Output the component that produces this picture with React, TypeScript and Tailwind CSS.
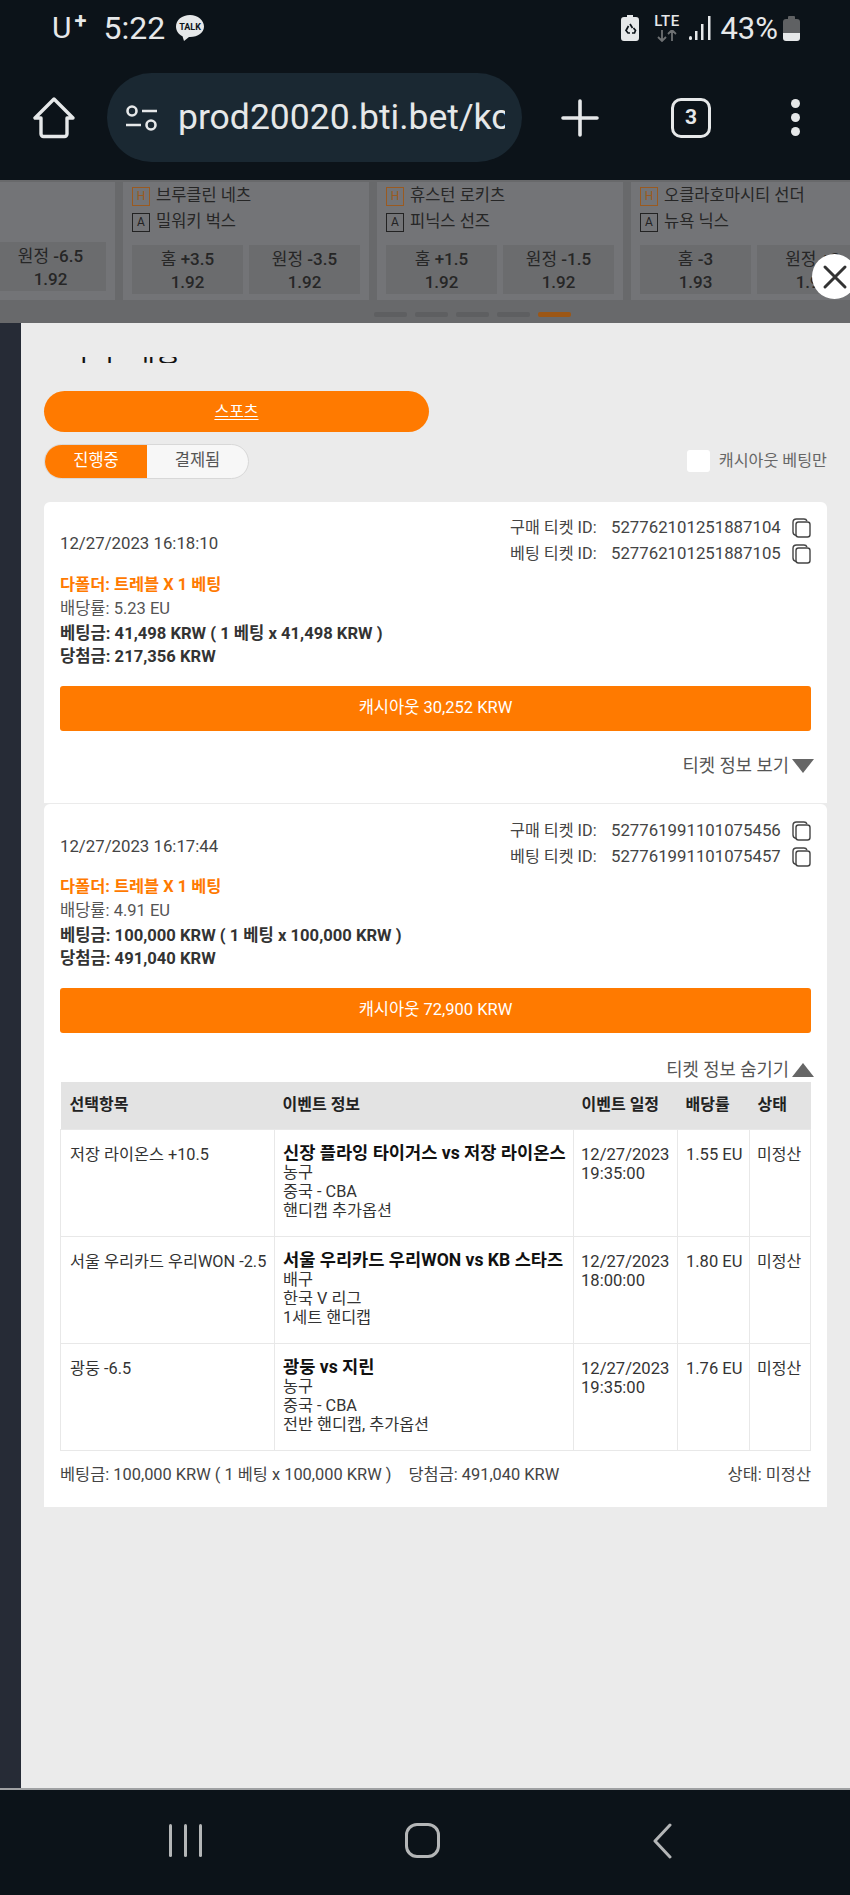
const games = [
  { home: '브루클린 네츠', away: '밀워키 벅스', odds: [['홈', '+3.5', '1.92'], ['원정', '-3.5', '1.92']] },
  { home: '휴스턴 로키츠', away: '피닉스 선즈', odds: [['홈', '+1.5', '1.92'], ['원정', '-1.5', '1.92']] },
  { home: '오클라호마시티 선더', away: '뉴욕 닉스', odds: [['홈', '-3', '1.93'], ['원정', '+3', '1.92']] },
];

const rows = [
  {
    pick: '저장 라이온스 +10.5',
    match: '신장 플라잉 타이거스 vs 저장 라이온스',
    info: ['농구', '중국 - CBA', '핸디캡 추가옵션'],
    date: '12/27/2023',
    time: '19:35:00',
    odds: '1.55 EU',
  },
  {
    pick: '서울 우리카드 우리WON -2.5',
    match: '서울 우리카드 우리WON vs KB 스타즈',
    info: ['배구', '한국 V 리그', '1세트 핸디캡'],
    date: '12/27/2023',
    time: '18:00:00',
    odds: '1.80 EU',
  },
  {
    pick: '광둥 -6.5',
    match: '광둥 vs 지린',
    info: ['농구', '중국 - CBA', '전반 핸디캡, 추가옵션'],
    date: '12/27/2023',
    time: '19:35:00',
    odds: '1.76 EU',
  },
];

function StatusBar() {
  return (
    <div className="flex h-[56px] items-center pl-[52px] pr-[50px] text-[#e6e8e9]">
      <span className="relative text-[30px] leading-none">
        U<span className="absolute -right-[15px] -top-[3px] text-[22px] font-bold">+</span>
      </span>
      <span className="ml-[32px] text-[32px] leading-none">5:22</span>
      <svg width="30" height="28" viewBox="0 0 30 28" className="ml-[10px]">
        <path d="M15 1C7 1 1 6 1 12.5c0 4.200 2.500 7.800 6.500 9.800L9 27l5-4h1c8 0 14-4.500 14-10.500S23 1 15 1z" fill="#e6e8e9" />
        <text x="15" y="16" textAnchor="middle" fontSize="9" fontWeight="700" fill="#0c1319">TALK</text>
      </svg>
      <svg width="18" height="26" viewBox="0 0 18 26" className="ml-auto">
        <path d="M6 0h6v2h3a3 3 0 0 1 3 3v18a3 3 0 0 1-3 3H3a3 3 0 0 1-3-3V5a3 3 0 0 1 3-3h3z" fill="#e6e8e9" />
        <path d="M9 9l2.500 4M7.500 11L5 15.500l2 2.500h2M11 18h2.500l1-2.500L12.500 13" fill="none" stroke="#0c1319" strokeWidth="1.700" />
      </svg>
      <div className="ml-[15px] flex w-[25px] flex-col items-center">
        <span className="text-[15px] font-medium leading-[15px] tracking-[0.5px]">LTE</span>
        <svg width="22" height="12" viewBox="0 0 22 12" className="mt-[1px]">
          <path d="M6 0v11M2 7l4 4 4-4M16 11V0M12 4l4-4 4 4" fill="none" stroke="#6e7173" strokeWidth="1.800" />
        </svg>
      </div>
      <svg width="22" height="24" viewBox="0 0 22 24" className="ml-[10px]">
        <rect x="0" y="20" width="3" height="4" rx="1.500" fill="#e6e8e9" />
        <rect x="6" y="15" width="2.500" height="9" fill="#e6e8e9" />
        <rect x="12" y="8" width="2.500" height="16" fill="#e6e8e9" />
        <rect x="19" y="0" width="2.500" height="24" fill="#e6e8e9" />
      </svg>
      <span className="ml-[9px] text-[31px] leading-none">43%</span>
      <div className="ml-[5px] flex h-[25px] w-[17px] flex-col items-center">
        <div className="h-[3px] w-[7px] rounded-t-[1px] bg-[#5f6163]" />
        <div className="flex flex-1 flex-col self-stretch overflow-hidden rounded-[3px]">
          <div className="flex-1 bg-[#5f6163]" />
          <div className="h-[8px] bg-[#e6e8e9]" />
        </div>
      </div>
    </div>
  );
}

function UrlBar() {
  return (
    <div className="mt-[17px] flex h-[89px] items-center text-[#e6e8e9]">
      <svg width="42" height="42" viewBox="0 0 42 42" className="ml-[33px]">
        <path d="M21 2L2 21h6v16a2.500 2.500 0 0 0 2.500 2.500h21A2.500 2.500 0 0 0 34 37V21h6z" fill="none" stroke="#e6e8e9" strokeWidth="3.400" strokeLinejoin="round" />
      </svg>
      <div className="ml-[32px] flex h-[89px] w-[415px] items-center overflow-hidden rounded-full bg-[#1a2832]">
        <svg width="34" height="28" viewBox="0 0 34 28" className="ml-[18px] shrink-0">
          <circle cx="7" cy="7" r="4.500" fill="none" stroke="#e6e8e9" strokeWidth="2.600" />
          <path d="M17 7h15M1 21h15" stroke="#e6e8e9" strokeWidth="2.600" />
          <circle cx="26" cy="21" r="4.500" fill="none" stroke="#e6e8e9" strokeWidth="2.600" />
        </svg>
        <div className="ml-[19px] w-[327px] shrink-0 overflow-hidden whitespace-nowrap text-[35.500px] leading-none">
          prod20020.bti.bet/kcasino
        </div>
      </div>
      <svg width="38" height="38" viewBox="0 0 38 38" className="ml-[39px]">
        <path d="M19 2v34M2 19h34" stroke="#e6e8e9" strokeWidth="3.600" strokeLinecap="round" />
      </svg>
      <div className="ml-[72px] flex h-[40px] w-[40px] items-center justify-center rounded-[10px] border-[3px] border-[#e6e8e9] text-[21px] font-bold leading-none">
        3
      </div>
      <div className="ml-[80px] flex flex-col gap-[5px]">
        <div className="h-[9px] w-[9px] rounded-full bg-[#e6e8e9]" />
        <div className="h-[9px] w-[9px] rounded-full bg-[#e6e8e9]" />
        <div className="h-[9px] w-[9px] rounded-full bg-[#e6e8e9]" />
      </div>
    </div>
  );
}

function OddsBox({ label, line, price }: { label: string; line: string; price: string }) {
  return (
    <div className="flex h-[49px] w-[111px] shrink-0 flex-col items-center justify-center bg-[#6b6c6e] text-[#262626]">
      <div className="text-[17px] leading-[24px]">
        {label} <span className="font-medium">{line}</span>
      </div>
      <div className="text-[17px] font-medium leading-[22px]">{price}</div>
    </div>
  );
}

function TeamRow({ badge, name, orange }: { badge: string; name: string; orange?: boolean }) {
  return (
    <div className="flex h-[26px] items-center gap-[6px]">
      <span
        className={
          orange
            ? 'flex h-[19px] w-[18px] items-center justify-center border border-[#9a5a20] text-[12px] text-[#9a5a20]'
            : 'flex h-[19px] w-[18px] items-center justify-center border border-[#222222] text-[12px] text-[#222222]'
        }
      >
        {badge}
      </span>
      <span className="whitespace-nowrap text-[16.500px] text-[#262626]">{name}</span>
    </div>
  );
}

function GameStrip() {
  return (
    <div className="relative h-[143px] overflow-hidden bg-[#68696b]">
      <div className="flex h-[120px] gap-[8px] pt-[2px]">
        <div className="-ml-[131px] flex h-[118px] w-[246px] shrink-0 items-end justify-end gap-[6px] bg-[#737477] px-[9px] pb-[9px]">
          <OddsBox label="원정" line="-6.5" price="1.92" />
        </div>
        {games.map((g) => (
          <div key={g.home} className="h-[118px] w-[246px] shrink-0 bg-[#737477] px-[9px] pt-[1px]">
            <TeamRow badge="H" name={g.home} orange />
            <TeamRow badge="A" name={g.away} />
            <div className="mt-[10px] flex gap-[6px]">
              {g.odds.map((o) => (
                <OddsBox key={o[0]} label={o[0]} line={o[1]} price={o[2]} />
              ))}
            </div>
          </div>
        ))}
      </div>
      <div className="ml-[374px] mt-[12px] flex gap-[8px]">
        <div className="h-[5px] w-[33px] rounded-[2px] bg-[#5e5f61]" />
        <div className="h-[5px] w-[33px] rounded-[2px] bg-[#5e5f61]" />
        <div className="h-[5px] w-[33px] rounded-[2px] bg-[#5e5f61]" />
        <div className="h-[5px] w-[33px] rounded-[2px] bg-[#5e5f61]" />
        <div className="h-[5px] w-[33px] rounded-[2px] bg-[#9c5716]" />
      </div>
    </div>
  );
}

function CopyIcon() {
  return (
    <svg width="19" height="20" viewBox="0 0 19 20" className="shrink-0">
      <path d="M4 17.500C2 17 1 15.500 1 14V4.500C1 2.500 2.500 1 4.500 1H12c1.500 0 2.500.7 3 2" fill="none" stroke="#444444" strokeWidth="1.400" />
      <rect x="4" y="4" width="14" height="15" rx="2.500" fill="#ffffff" stroke="#444444" strokeWidth="1.400" />
    </svg>
  );
}

function TicketId({ label, id }: { label: string; id: string }) {
  return (
    <div className="flex h-[26px] items-center text-[16.200px] text-[#444444]">
      <span className="w-[101px] whitespace-nowrap">{label}</span>
      <span className="w-[181px] whitespace-nowrap text-[16.800px]">{id}</span>
      <CopyIcon />
    </div>
  );
}

function Ticket({
  date,
  buyId,
  betId,
  odds,
  stake,
  win,
  cashout,
  pt,
  titleGap,
  children,
}: {
  date: string;
  buyId: string;
  betId: string;
  odds: string;
  stake: string;
  win: string;
  cashout: string;
  pt: string;
  titleGap: string;
  children: React.ReactNode;
}) {
  return (
    <div className={'rounded-t-[6px] bg-white px-[16px] ' + pt}>
      <div className="flex items-center justify-between">
        <span className="mt-[5px] text-[16.800px] text-[#444444]">{date}</span>
        <div>
          <TicketId label="구매 티켓 ID:" id={buyId} />
          <TicketId label="베팅 티켓 ID:" id={betId} />
        </div>
      </div>
      <div className={'text-[16.400px] font-bold leading-[25px] text-[#ff7a00] ' + titleGap}>다폴더: 트레블 X 1 베팅</div>
      <div className="text-[16.500px] leading-[24px] text-[#555555]">배당률: {odds} EU</div>
      <div className="text-[16.600px] font-bold leading-[26px] text-[#333333]">
        베팅금: {stake} KRW ( 1 베팅 x {stake} KRW )
      </div>
      <div className="text-[16.600px] font-bold leading-[20px] text-[#333333]">당첨금: {win} KRW</div>
      <button className="mt-[19px] flex h-[45px] w-full items-center justify-center rounded-[3px] bg-[#ff7a00] text-[16.500px] text-white">
        캐시아웃 {cashout} KRW
      </button>
      {children}
    </div>
  );
}

function BetTable() {
  return (
    <table className="w-[750px] table-fixed border-collapse text-[16.300px] text-[#333333]">
      <colgroup>
        <col className="w-[214px]" />
        <col className="w-[299px]" />
        <col className="w-[104px]" />
        <col className="w-[72px]" />
        <col className="w-[61px]" />
      </colgroup>
      <thead>
        <tr className="h-[47px] bg-[#e3e3e3] text-left text-[16px] font-bold text-[#222222]">
          <th className="pl-[9px]">선택항목</th>
          <th className="pl-[8px]">이벤트 정보</th>
          <th className="pl-[8px]">이벤트 일정</th>
          <th className="pl-[8px]">배당률</th>
          <th className="pl-[8px]">상태</th>
        </tr>
      </thead>
      <tbody>
        {rows.map((r) => (
          <tr key={r.pick} className="h-[107px] align-top">
            <td className="border border-[#e8e8e8] pl-[9px] pt-[15px] leading-[19px] whitespace-nowrap">{r.pick}</td>
            <td className="border border-[#e8e8e8] pl-[8px] pt-[14px] leading-[19px]">
              <div className="whitespace-nowrap text-[17.600px] font-bold text-[#111111]">{r.match}</div>
              {r.info.map((line) => (
                <div key={line} className="whitespace-nowrap">
                  {line}
                </div>
              ))}
            </td>
            <td className="border border-[#e8e8e8] pl-[7px] pt-[15px] text-[16.600px] leading-[19px]">
              <div>{r.date}</div>
              <div>{r.time}</div>
            </td>
            <td className="border border-[#e8e8e8] pl-[8px] pt-[15px] text-[16.500px] leading-[19px] whitespace-nowrap">{r.odds}</td>
            <td className="border border-[#e8e8e8] pl-[7px] pt-[15px] text-[16px] leading-[19px] whitespace-nowrap">미정산</td>
          </tr>
        ))}
      </tbody>
    </table>
  );
}

function Toggle({ text, up }: { text: string; up?: boolean }) {
  return (
    <div className="-mr-[3px] flex h-[24px] items-center justify-end gap-[3px] text-[17.700px] text-[#555555]">
      <span>{text}</span>
      {up ? (
        <div className="h-0 w-0 border-x-[11px] border-b-[14px] border-x-transparent border-b-[#666666]" />
      ) : (
        <div className="h-0 w-0 border-x-[11px] border-t-[14px] border-x-transparent border-t-[#666666]" />
      )}
    </div>
  );
}

function Modal() {
  return (
    <div className="h-[1465px] flex-1 bg-[#ebebeb] pl-[23px] pr-[23px]">
      <div className="flex h-[40px] items-end overflow-hidden pl-[27px]">
        <div className="-mb-[5px] h-[11px] overflow-hidden">
          <div className="-mt-[22px] text-[28px] leading-[36px] text-[#111111]">구두 내용</div>
        </div>
      </div>
      <a className="mt-[28px] flex h-[41px] w-[385px] items-center justify-center rounded-full bg-[#ff7a00] text-[16px] text-white underline underline-offset-2">
        스포츠
      </a>
      <div className="mt-[12px] flex items-center justify-between">
        <div className="flex h-[35px] w-[205px] overflow-hidden rounded-full border border-[#d8d8d8] bg-[#f7f7f7] text-[16.500px]">
          <div className="flex w-[102px] items-center justify-center bg-[#ff7a00] text-white">진행중</div>
          <div className="flex flex-1 items-center justify-center text-[#555555]">결제됨</div>
        </div>
        <div className="flex items-center gap-[9px] text-[16.200px] text-[#666666]">
          <div className="h-[22px] w-[23px] rounded-[3px] bg-white" />
          <span>캐시아웃 베팅만</span>
        </div>
      </div>
      <div className="mt-[23px] flex flex-col gap-[1px]">
        <Ticket
          date="12/27/2023 16:18:10"
          buyId="527762101251887104"
          betId="527762101251887105"
          odds="5.23"
          stake="41,498"
          win="217,356"
          cashout="30,252"
          pt="pt-[13px]"
          titleGap="mt-[5px]"
        >
          <div className="mt-[23px] pb-[25px]">
            <Toggle text="티켓 정보 보기" />
          </div>
        </Ticket>
        <Ticket
          date="12/27/2023 16:17:44"
          buyId="527761991101075456"
          betId="527761991101075457"
          odds="4.91"
          stake="100,000"
          win="491,040"
          cashout="72,900"
          pt="pt-[14px]"
          titleGap="mt-[4px]"
        >
          <div className="mt-[25px]">
            <Toggle text="티켓 정보 숨기기" up />
          </div>
          <BetTable />
          <div className="flex h-[56px] items-center justify-between pb-[6px] text-[16.400px] text-[#444444]">
            <div className="flex gap-[17px]">
              <span>베팅금: 100,000 KRW ( 1 베팅 x 100,000 KRW )</span>
              <span>당첨금: 491,040 KRW</span>
            </div>
            <span>상태: 미정산</span>
          </div>
        </Ticket>
      </div>
    </div>
  );
}

function NavBar() {
  return (
    <div className="relative flex h-[105px] items-center bg-[#0c1319] pb-[4px]">
      <div className="ml-[169px] flex gap-[12px]">
        <div className="h-[33px] w-[3px] rounded-full bg-[#b4b6b7]" />
        <div className="h-[33px] w-[3px] rounded-full bg-[#b4b6b7]" />
        <div className="h-[33px] w-[3px] rounded-full bg-[#b4b6b7]" />
      </div>
      <div className="ml-[203px] h-[35px] w-[35px] rounded-[12px] border-[3px] border-[#b4b6b7]" />
      <svg width="20" height="36" viewBox="0 0 20 36" className="ml-[212px]">
        <path d="M18 2L3 18l15 16" fill="none" stroke="#b4b6b7" strokeWidth="3" strokeLinecap="round" strokeLinejoin="round" />
      </svg>
    </div>
  );
}

export default function App() {
  return (
    <div className="relative h-[1895px] w-[850px] overflow-hidden bg-[#0c1319] [font-family:Roboto,'Noto_Sans_CJK_KR',sans-serif]">
      <div className="h-[180px]">
        <StatusBar />
        <UrlBar />
      </div>
      <GameStrip />
      <div className="flex">
        <div className="w-[22px] bg-[#262b36]" />
        <Modal />
      </div>
      <div className="h-[2px] bg-[#9fa1a3]" />
      <NavBar />
      <button className="absolute left-[812px] top-[254px] flex h-[45px] w-[45px] items-center justify-center rounded-full bg-white">
        <svg width="26" height="26" viewBox="0 0 26 26">
          <path d="M3 3l20 20M23 3L3 23" stroke="#333333" strokeWidth="3" strokeLinecap="round" />
        </svg>
      </button>
    </div>
  );
}
